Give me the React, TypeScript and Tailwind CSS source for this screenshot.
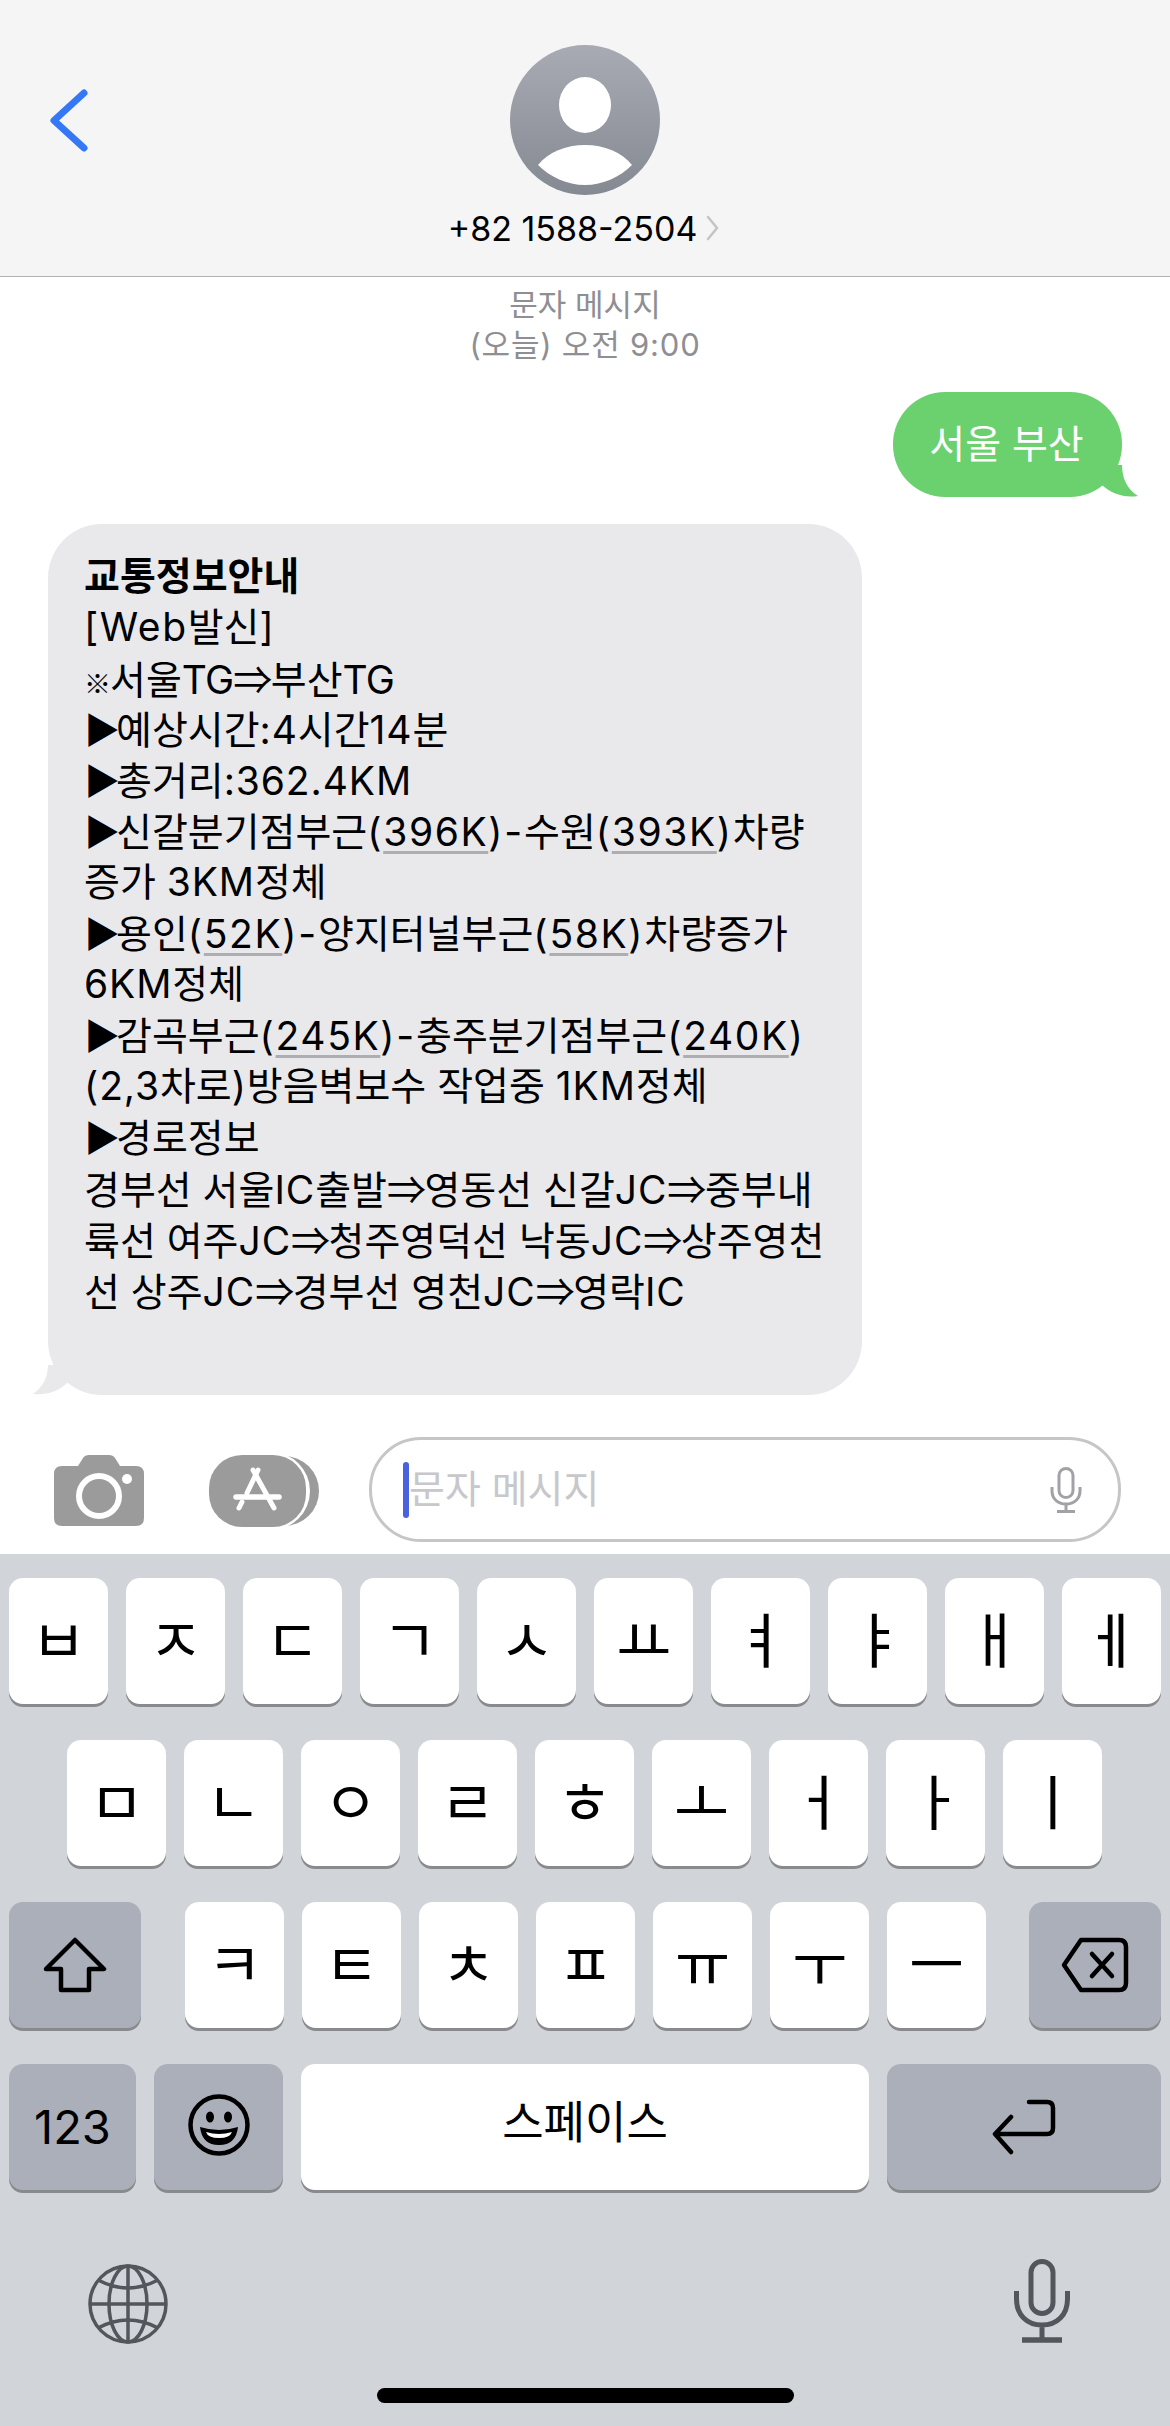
import React from "react";

const L = ({ children }: { children: React.ReactNode }) => (
  <span className="tracking-[0.9px]">{children}</span>
);

const P = ({ children }: { children: React.ReactNode }) => (
  <span className="tracking-[1.8px]">{children}</span>
);

const T = ({ children }: { children: React.ReactNode }) => (
  <span className="tracking-[-0.8px]">{children}</span>
);

const U = ({ children }: { children: React.ReactNode }) => (
  <span className="tracking-[1.6px] [text-decoration-line:underline] [text-decoration-color:#aeaeb2] [text-decoration-thickness:3px] [text-underline-offset:5px]">
    {children}
  </span>
);

const Tri = () => <span className="font-['Noto_Sans_CJK_KR',sans-serif] text-[36px] tracking-[-4px]">▶</span>;
const Arr = () => <span className="font-['Noto_Sans_CJK_KR',sans-serif] tracking-[-1.5px]">⇒</span>;

const Line = ({ children, bold }: { children: React.ReactNode; bold?: boolean }) => (
  <div className={`h-[51px] overflow-visible ${bold ? "font-bold" : ""}`}>{children}</div>
);

const Key = ({ label }: { label: string }) => (
  <div className="w-[99px] h-[126px] rounded-[14px] bg-white shadow-[0_3px_0_#898a8d] flex items-center justify-center text-[60px] leading-none text-black">
    {label}
  </div>
);

const Dark = ({ w, children }: { w: string; children: React.ReactNode }) => (
  <div className={`${w} h-[126px] rounded-[14px] bg-[#abafb9] shadow-[0_3px_0_#898a8d] flex items-center justify-center text-black`}>
    {children}
  </div>
);

export default function App() {
  return (
    <div className="w-[1170px] h-[2426px] overflow-hidden bg-white flex flex-col font-['Inter','Noto_Sans_CJK_KR',sans-serif]">
      {/* header */}
      <header className="relative h-[277px] shrink-0 bg-[#f5f5f5] border-b border-[#b4b4b4] flex flex-col items-center pt-[45px]">
        <svg className="absolute left-[46px] top-[85px]" width="46" height="71" viewBox="0 0 46 71" fill="none">
          <path d="M38 8 L8 35.5 L38 63" stroke="#3478f6" strokeWidth="7" strokeLinecap="round" strokeLinejoin="round" />
        </svg>
        <svg width="150" height="150" viewBox="0 0 150 150">
          <defs>
            <linearGradient id="av" x1="0" y1="0" x2="0" y2="1">
              <stop offset="0" stopColor="#a8abb4" />
              <stop offset="1" stopColor="#858992" />
            </linearGradient>
          </defs>
          <circle cx="75" cy="75" r="75" fill="url(#av)" />
          <ellipse cx="75" cy="60" rx="26" ry="28" fill="#fff" />
          <path d="M28 120 C38 107 56 100 75 100 C94 100 112 107 122 120 C110 132 93 140 75 140 C57 140 40 132 28 120 Z" fill="#fff" />
        </svg>
        <div className="mt-[10px] flex items-center h-[46px] pr-[2px] text-[34px] text-black">
          <span>+82 1588-2504</span>
          <svg className="ml-[9px]" width="14" height="26" viewBox="0 0 14 26" fill="none">
            <path d="M2 2 L11 13 L2 24" stroke="#c4c4c6" strokeWidth="2.5" strokeLinecap="round" />
          </svg>
        </div>
      </header>

      {/* messages */}
      <main className="h-[1123px] shrink-0 flex flex-col pt-[8px] overflow-hidden">
        <div className="text-center text-[31px] leading-[40px] text-[#8e8e93] shrink-0">
          <div>문자 메시지</div>
          <div className="tracking-[0.8px]">(오늘) 오전 9:00</div>
        </div>
        <div className="relative shrink-0 self-end mr-[48px] mt-[27px] w-[229px] h-[105px] rounded-[52px] bg-[#6bd06e] flex items-center justify-center pr-[2px] text-[39px] text-white">
          서울 부산
          <svg className="absolute right-[-18px] bottom-0" width="50" height="32" viewBox="0 0 50 32">
            <path d="M32 0 C32 14 38 25 48 31 C34 33 22 29 12 20 L0 0 Z" fill="#6bd06e" />
          </svg>
        </div>
        <div className="relative shrink-0 ml-[48px] mt-[27px] w-[814px] h-[871px] rounded-[54px] bg-[#e9e9eb] pt-[26px] pl-[36px] text-[39px] leading-[51px] text-black whitespace-nowrap">
          <svg className="absolute left-[-15px] bottom-0" width="50" height="30" viewBox="0 0 50 30">
            <path d="M15 0 C15 13 9 23 0 29 C14 30 25 27 34 18 L47 0 Z" fill="#e9e9eb" />
          </svg>
          <div className="relative">
            <Line bold>교통정보안내</Line>
            <Line><span className="tracking-[1.6px]">[Web</span>발신<L>]</L></Line>
            <Line><span className="font-['Noto_Sans_CJK_KR',sans-serif] font-bold text-[27px] tracking-[-1px]">※</span>서울<T>TG</T><Arr />부산<T>TG</T></Line>
            <Line><Tri />예상시간<L>:4</L>시간<L>14</L>분</Line>
            <Line><Tri />총거리<L>:362.4KM</L></Line>
            <Line><Tri />신갈분기점부근<P>(</P><U>396K</U><P>)-</P>수원<P>(</P><U>393K</U><P>)</P>차량</Line>
            <Line>증가 <L>3KM</L>정체</Line>
            <Line><Tri />용인<P>(</P><U>52K</U><P>)-</P>양지터널부근<P>(</P><U>58K</U><P>)</P>차량증가</Line>
            <Line><L>6KM</L>정체</Line>
            <Line><Tri />감곡부근<P>(</P><U>245K</U><P>)-</P>충주분기점부근<P>(</P><U>240K</U><P>)</P></Line>
            <Line><L>(2,3</L>차로<L>)</L>방음벽보수 작업중 <L>1KM</L>정체</Line>
            <Line><Tri />경로정보</Line>
            <Line>경부선 서울<L>IC</L>출발<Arr />영동선 신갈<L>JC</L><Arr />중부내</Line>
            <Line>륙선 여주<L>JC</L><Arr />청주영덕선 낙동<L>JC</L><Arr />상주영천</Line>
            <Line>선 상주<L>JC</L><Arr />경부선 영천<L>JC</L><Arr />영락<L>IC</L></Line>
          </div>
        </div>
      </main>

      {/* composer */}
      <div className="h-[154px] shrink-0 flex items-start pt-[37px] pl-[54px]">
        <svg className="mt-[18px]" width="90" height="71" viewBox="0 0 90 71">
          <path fill="#9b9b9b" d="M8 11 H24 L29 3 Q31 0 35 0 H55 Q59 0 61 3 L66 11 H82 Q90 11 90 19 V63 Q90 71 82 71 H8 Q0 71 0 63 V19 Q0 11 8 11 Z" />
          <circle cx="45" cy="41" r="20" fill="none" stroke="#fff" strokeWidth="6" />
          <circle cx="73" cy="24" r="5" fill="#fff" />
        </svg>
        <svg className="ml-[65px] mt-[18px]" width="110" height="72" viewBox="0 0 110 72">
          <rect x="12" y="1" width="98" height="70" rx="35" fill="#9b9b9b" />
          <rect x="-4" y="-3" width="105" height="78" rx="39" fill="#fff" />
          <rect x="0" y="0" width="97" height="72" rx="33" fill="#9b9b9b" />
          <g stroke="#fff" strokeWidth="5" strokeLinecap="round" fill="none">
            <path d="M49 15 L38 38" />
            <path d="M33 47 L30 53" />
            <path d="M44 15 L65 53" />
            <path d="M27 42 H70" strokeWidth="5.5" />
          </g>
        </svg>
        <div className="relative ml-[50px] w-[752px] h-[105px] rounded-[52px] border-[3px] border-[#c6c6c8] bg-white flex items-center pl-[31px] text-[39px] text-[#c7c7cc]">
          <span className="w-[6px] h-[56px] rounded-full bg-[#4a62e0]" />
          <span>문자 메시지</span>
          <svg className="absolute right-[36px] top-[27px]" width="32" height="46" viewBox="0 0 32 46" fill="none" stroke="#a2a2a6" strokeWidth="3">
            <rect x="9" y="1.5" width="14" height="29" rx="7" />
            <path d="M2 20 V24 C2 32 8 37 16 37 C24 37 30 32 30 24 V20 M16 37 V44 M7 44.5 H25" />
          </svg>
        </div>
      </div>

      {/* keyboard */}
      <div className="flex-1 min-h-0 bg-[#d1d4d9] flex flex-col pt-[24px] px-[9px] gap-[36px] relative">
        <div className="flex gap-[18px]">
          {["ㅂ", "ㅈ", "ㄷ", "ㄱ", "ㅅ", "ㅛ", "ㅕ", "ㅑ", "ㅐ", "ㅔ"].map((k) => (
            <Key key={k} label={k} />
          ))}
        </div>
        <div className="flex gap-[18px] pl-[58px]">
          {["ㅁ", "ㄴ", "ㅇ", "ㄹ", "ㅎ", "ㅗ", "ㅓ", "ㅏ", "ㅣ"].map((k) => (
            <Key key={k} label={k} />
          ))}
        </div>
        <div className="flex">
          <Dark w="w-[132px]">
            <svg width="66" height="56" viewBox="0 0 66 56" fill="none">
              <path d="M33 3 L62 32 H47 V53 H19 V32 H4 Z" stroke="#000" strokeWidth="4.5" strokeLinejoin="round" />
            </svg>
          </Dark>
          <div className="flex gap-[18px] ml-[44px]">
            {["ㅋ", "ㅌ", "ㅊ", "ㅍ", "ㅠ", "ㅜ", "ㅡ"].map((k) => (
              <Key key={k} label={k} />
            ))}
          </div>
          <div className="ml-auto">
            <Dark w="w-[132px]">
              <svg width="68" height="56" viewBox="0 0 68 56" fill="none">
                <path d="M20 3 H58 Q65 3 65 10 V46 Q65 53 58 53 H20 L3 28 Z" stroke="#000" strokeWidth="4.5" strokeLinejoin="round" />
                <path d="M31 17 L51 39 M51 17 L31 39" stroke="#000" strokeWidth="4.5" strokeLinecap="round" />
              </svg>
            </Dark>
          </div>
        </div>
        <div className="flex gap-[18px]">
          <Dark w="w-[127px]">
            <span className="text-[47px]">123</span>
          </Dark>
          <Dark w="w-[129px]">
            <svg className="mb-[4px]" width="62" height="62" viewBox="0 0 62 62" fill="none">
              <circle cx="31" cy="31" r="28.5" stroke="#000" strokeWidth="4.5" />
              <ellipse cx="22" cy="23" rx="4" ry="5.5" fill="#000" />
              <ellipse cx="40" cy="23" rx="4" ry="5.5" fill="#000" />
              <path d="M12 33 Q31 39 50 33 Q48 51 31 51 Q14 51 12 33 Z" fill="#000" />
              <path d="M18 38 Q31 42 44 38 Q42 44 31 44 Q20 44 18 38 Z" fill="#fff" />
            </svg>
          </Dark>
          <div className="w-[568px] h-[126px] rounded-[14px] bg-white shadow-[0_3px_0_#898a8d] flex items-center justify-center pb-[8px] text-[45px] text-black">
            스페이스
          </div>
          <Dark w="w-[274px]">
            <svg width="66" height="56" viewBox="0 0 66 56" fill="none">
              <path d="M38 3 H56 Q62 3 62 9 V29 Q62 35 56 35 H6 M20 18 L4 35 L20 53" stroke="#000" strokeWidth="4.5" strokeLinecap="round" strokeLinejoin="round" />
            </svg>
          </Dark>
        </div>
        <div className="flex justify-between pl-[79px] pr-[91px] mt-[33px]">
          <svg className="mt-[5px]" width="80" height="80" viewBox="0 0 80 80" fill="none" stroke="#53565c" strokeWidth="3.5">
            <circle cx="40" cy="40" r="38" />
            <ellipse cx="40" cy="40" rx="19" ry="38" />
            <path d="M40 2 V78 M2 40 H78" />
            <path d="M10 16 Q40 32 70 16 M10 64 Q40 48 70 64" />
          </svg>
          <svg width="56" height="84" viewBox="0 0 56 84" fill="none" stroke="#53565c" strokeWidth="5">
            <rect x="17" y="2.5" width="22" height="52" rx="11" />
            <path d="M2.5 32 V40 C2.5 56 13 66 28 66 C43 66 53.5 56 53.5 40 V32 M28 66 V80" />
            <path d="M8 81 H48" strokeWidth="5.5" />
          </svg>
        </div>
        <div className="absolute left-[377px] top-[834px] w-[417px] h-[15px] rounded-full bg-black" />
      </div>
    </div>
  );
}
